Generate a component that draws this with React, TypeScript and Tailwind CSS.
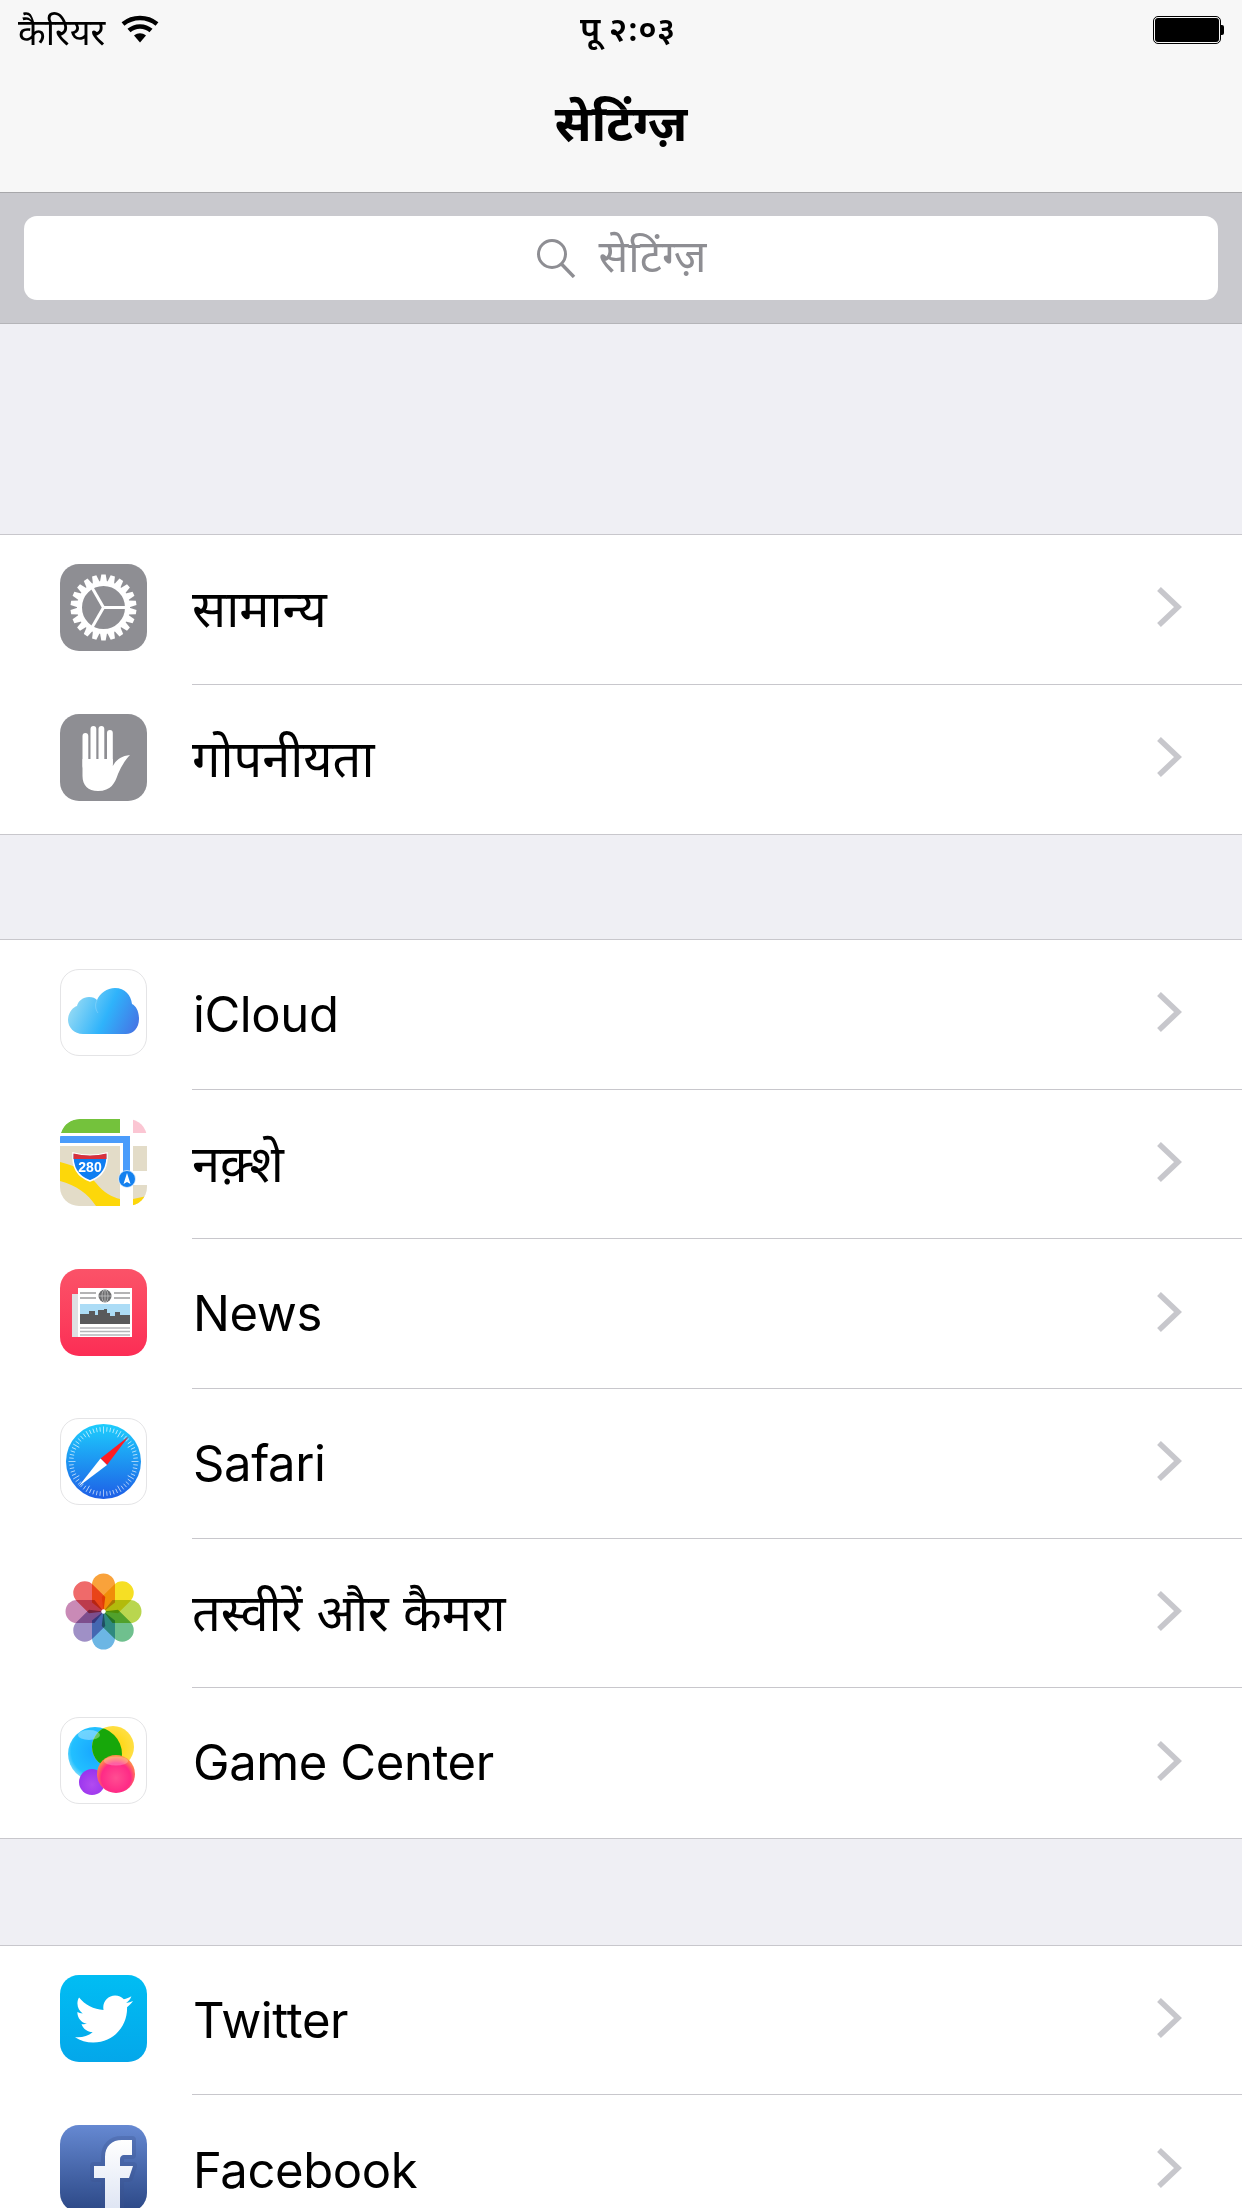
import { FaTwitter } from "react-icons/fa";
import { ReactNode } from "react";

function Svg({ children }: { children: ReactNode }) {
  return (
    <svg viewBox="0 0 87 87" className="block w-full h-full">
      {children}
    </svg>
  );
}

function GearIcon() {
  const teeth = Array.from({ length: 22 }, (_, i) => (i * 360) / 22);
  return (
    <div className="w-[87px] h-[87px] rounded-[19px] bg-[#8e8e93]">
      <Svg>
        <g transform="translate(43.5 43.5)" stroke="#fff" fill="none">
          {teeth.map((a) => (
            <path key={a} d="M-3.6 -25L-2.2 -33H2.2L3.6 -25Z" fill="#fff" stroke="none" transform={`rotate(${a})`} />
          ))}
          <circle r="24" strokeWidth="5" />
          <line x1="0" y1="0" x2="23" y2="0" strokeWidth="3" />
          <line x1="0" y1="0" x2="-11.5" y2="20" strokeWidth="3" />
          <line x1="0" y1="0" x2="-11.5" y2="-20" strokeWidth="3" />
        </g>
      </Svg>
    </div>
  );
}

function HandIcon() {
  return (
    <div className="w-[87px] h-[87px] rounded-[19px] bg-[#8e8e93]">
      <Svg>
        <g fill="#fff">
          <rect x="22.5" y="19" width="5.8" height="36" rx="2.9" />
          <rect x="30.5" y="12" width="5.8" height="36" rx="2.9" />
          <rect x="38.5" y="12" width="5.8" height="36" rx="2.9" />
          <rect x="47" y="16" width="5.8" height="36" rx="2.9" />
          <path d="M22.5 45H52.8V52C56 46 61 42 70 41C65 46 61 53 58 60C55 69 51 77 38 77C28 77 22.5 71 22.5 62Z" />
        </g>
      </Svg>
    </div>
  );
}

function CloudIcon() {
  return (
    <div className="w-[87px] h-[87px] rounded-[19px] bg-white border border-[#e4e4e6]">
      <svg viewBox="1 1 85 85" className="block w-full h-full">
        <defs>
          <linearGradient id="cloudGrad" x1="0" y1="0.4" x2="1" y2="0.7">
            <stop offset="0" stopColor="#9adcf4" />
            <stop offset="0.55" stopColor="#2fb3fb" />
            <stop offset="1" stopColor="#4478e6" />
          </linearGradient>
        </defs>
        <path
          d="M23 65C14 65 8 58 8 51C8 44 13 38 17 37C18 32 23 28 29 28C33 28 35 29 37 31C40 24 47 19 55 19C65 19 71 26 72 35C76 37 79 42 79 50C79 59 73 65 66 65Z"
          fill="url(#cloudGrad)"
        />
        <path d="M37 31C35 35 35 40 38 44" stroke="#fff" strokeOpacity="0.2" fill="none" />
      </svg>
    </div>
  );
}

function MapsIcon() {
  return (
    <div className="w-[87px] h-[87px] rounded-[19px] overflow-hidden bg-white">
      <Svg>
        <path d="M1 14C4 5 11 0 20 0H60V14Z" fill="#74c23c" />
        <path d="M73 0C80 1 85 6 87 14H73Z" fill="#fbc6d3" />
        <rect x="0" y="17" width="70" height="7" fill="#4a9cfb" />
        <rect x="63" y="17" width="7" height="38" fill="#4a9cfb" />
        <rect x="0" y="27" width="60" height="60" fill="#e3dcc8" />
        <rect x="73" y="27" width="14" height="25" fill="#e3dcc8" />
        <rect x="73" y="66" width="14" height="21" fill="#e3dcc8" />
        <path d="M0 43C20 48 28 54 36 64C44 74 52 78 60 80V87H36C28 75 16 66 0 62Z" fill="#fdd70a" />
        <path d="M73 80L87 77V87H73Z" fill="#fdd70a" />
        <path d="M13 34C24 37 36 37 47 34C48 47 44 57 30 62C16 57 12 47 13 34Z" fill="#0f7ef2" stroke="#fff" strokeWidth="1.5" />
        <path d="M13.5 34.5C24 37 36 37 46.5 34.5L46.5 40H13.5Z" fill="#d8313d" />
        <text x="30" y="53" textAnchor="middle" fill="#fff" fontSize="14" fontWeight="700" fontFamily="Liberation Sans">280</text>
        <circle cx="67" cy="60" r="8.5" fill="#1481ef" stroke="#e9f2fb" strokeWidth="0.8" />
        <path d="M67 54L70.5 65L67 63L63.5 65Z" fill="#fff" />
      </Svg>
    </div>
  );
}

function NewsIcon() {
  return (
    <div className="w-[87px] h-[87px] rounded-[19px] bg-gradient-to-b from-[#fb5268] to-[#fc2c55]">
      <Svg>
        <rect x="12" y="25" width="8" height="43" fill="#dfdfe2" />
        <rect x="18" y="19" width="54" height="49" fill="#fff" />
        <g stroke="#8a8a8c" strokeWidth="1.3">
          <line x1="20" y1="24" x2="36" y2="24" />
          <line x1="20" y1="29" x2="36" y2="29" />
          <line x1="54" y1="24" x2="70" y2="24" />
          <line x1="54" y1="29" x2="70" y2="29" />
        </g>
        <circle cx="45" cy="27" r="6.5" fill="#6c6c6e" />
        <g stroke="#cfcfcf" strokeWidth="0.7" fill="none">
          <line x1="38.5" y1="27" x2="51.5" y2="27" />
          <line x1="45" y1="20.5" x2="45" y2="33.5" />
          <ellipse cx="45" cy="27" rx="3" ry="6.5" />
        </g>
        <rect x="20" y="35" width="50" height="20" fill="#acdcf6" />
        <path d="M20 45H29V42H35V46H38V41H44V40H47V44H50V47H55V43H60V46H70V55H20Z" fill="#59595b" />
        <g stroke="#b5b5b8" strokeWidth="1.4">
          <line x1="20" y1="59" x2="70" y2="59" />
          <line x1="20" y1="62.5" x2="70" y2="62.5" />
          <line x1="20" y1="66" x2="70" y2="66" />
        </g>
      </Svg>
    </div>
  );
}

function SafariIcon() {
  const ticks = Array.from({ length: 60 }, (_, i) => i * 6);
  return (
    <div className="w-[87px] h-[87px] rounded-[19px] bg-white border border-[#e4e4e6]">
      <svg viewBox="1 1 85 85" className="block w-full h-full">
        <defs>
          <linearGradient id="safariGrad" x1="0" y1="0" x2="0" y2="1">
            <stop offset="0" stopColor="#1dcdfd" />
            <stop offset="1" stopColor="#1e5ee6" />
          </linearGradient>
        </defs>
        <circle cx="43.5" cy="43.5" r="37.5" fill="url(#safariGrad)" />
        <g transform="translate(43.5 43.5)" stroke="#fff" strokeOpacity="0.75" strokeWidth="0.8">
          {ticks.map((a) => (
            <line key={a} x1="0" y1={a % 30 === 0 ? -35 : -34.5} x2="0" y2={a % 30 === 0 ? -28 : -30} transform={`rotate(${a})`} />
          ))}
        </g>
        <polygon points="68.5,18.5 40.5,40.5 47,47" fill="#ff1c23" />
        <polygon points="18.5,68.5 40.5,40.5 47,47" fill="#fff" />
      </svg>
    </div>
  );
}

function PhotosIcon() {
  const petals = [
    [0, "#f9a23b"],
    [45, "#f6df24"],
    [90, "#b9d64f"],
    [135, "#6fc08e"],
    [180, "#6cb6e4"],
    [225, "#9f90c6"],
    [270, "#c98ab6"],
    [315, "#ef6a6a"],
  ] as const;
  return (
    <div className="w-[87px] h-[87px] rounded-[19px] bg-white">
      <Svg>
        <g transform="translate(43.5 43.5)">
          {petals.map(([a, c]) => (
            <path
              key={a}
              d="M0 0L-11.5 -9V-26.5A11.5 11.5 0 0 1 11.5 -26.5V-9Z"
              fill={c}
              transform={`rotate(${a})`}
              className="mix-blend-multiply"
            />
          ))}
          <circle r="2.2" fill="#fff" />
        </g>
      </Svg>
    </div>
  );
}

function GameCenterIcon() {
  return (
    <div className="w-[87px] h-[87px] rounded-[19px] bg-white border border-[#e4e4e6]">
      <svg viewBox="1 1 85 85" className="block w-full h-full">
        <defs>
          <radialGradient id="gcBlue" cx="0.5" cy="0.45" r="0.55">
            <stop offset="0" stopColor="#18a6ff" />
            <stop offset="0.8" stopColor="#22c0ff" />
            <stop offset="1" stopColor="#7fdcfb" />
          </radialGradient>
          <radialGradient id="gcYellow" cx="0.5" cy="0.5" r="0.55">
            <stop offset="0" stopColor="#ffd400" />
            <stop offset="1" stopColor="#ffe04a" />
          </radialGradient>
          <radialGradient id="gcPink" cx="0.5" cy="0.6" r="0.55">
            <stop offset="0" stopColor="#ff4e92" />
            <stop offset="0.7" stopColor="#ff2a86" />
            <stop offset="1" stopColor="#ff8a4a" />
          </radialGradient>
          <radialGradient id="gcPurple" cx="0.5" cy="0.6" r="0.55">
            <stop offset="0" stopColor="#b24bf0" />
            <stop offset="1" stopColor="#9a35ee" />
          </radialGradient>
          <clipPath id="gcBlueClip">
            <circle cx="35" cy="37" r="27" />
          </clipPath>
        </defs>
        <circle cx="35" cy="37" r="27" fill="url(#gcBlue)" />
        <circle cx="53" cy="30" r="21" fill="url(#gcYellow)" />
        <circle cx="53" cy="30" r="21" fill="#17a70a" clipPath="url(#gcBlueClip)" />
        <ellipse cx="29" cy="18" rx="11" ry="5" fill="#fff" opacity="0.35" />
        <circle cx="32" cy="65" r="13" fill="url(#gcPurple)" />
        <circle cx="56" cy="57" r="19" fill="url(#gcPink)" />
        <ellipse cx="56" cy="44" rx="12" ry="4.5" fill="#fff" opacity="0.25" />
      </svg>
    </div>
  );
}

function TwitterIcon() {
  return (
    <div className="w-[87px] h-[87px] rounded-[19px] bg-gradient-to-b from-[#01bdf3] to-[#04a7ea] flex items-center justify-center">
      <FaTwitter className="text-white w-[58px] h-[58px]" />
    </div>
  );
}

function FacebookIcon() {
  return (
    <div className="w-[87px] h-[87px] rounded-[19px] bg-gradient-to-b from-[#6689d2] to-[#2c4886] overflow-hidden">
      <Svg>
        <defs>
          <linearGradient id="fbGrad" x1="0" y1="0" x2="0" y2="1">
            <stop offset="0" stopColor="#ffffff" />
            <stop offset="1" stopColor="#dde4f3" />
          </linearGradient>
        </defs>
        <path
          d="M45 87V53H34V41H45V32C45 21 52 15 62 15H72V30H65C61 30 60 32 60 35V41H73L69 53H60V87Z"
          fill="url(#fbGrad)"
          stroke="#3a5490"
          strokeOpacity="0.3"
          strokeWidth="8"
          paintOrder="stroke"
          strokeLinejoin="round"
        />
      </Svg>
    </div>
  );
}

function Chevron() {
  return (
    <svg width="26" height="42" viewBox="0 0 26 42" className="block mb-[4px]">
      <path d="M3 3L22 21L3 39" fill="none" stroke="#c7c7cc" strokeWidth="5.5" />
    </svg>
  );
}

function Row({ icon, label, latin, last }: { icon: ReactNode; label: string; latin?: boolean; last?: boolean }) {
  return (
    <div className="flex h-[149.6px] pl-[60px]">
      <div className="flex items-center shrink-0 w-[132px] pb-[4px]">{icon}</div>
      <div className={"flex-1 flex items-center justify-between pr-[60px] " + (last ? "" : "border-b border-[#c8c7cc]")}>
        <span className={"leading-none text-black " + (latin ? "text-[49px] tracking-[-0.4px] pl-px" : "text-[50.5px]")}>{label}</span>
        <Chevron />
      </div>
    </div>
  );
}

const groups: { label: string; latin?: boolean; icon: ReactNode }[][] = [
  [
    { label: "सामान्य", icon: <GearIcon /> },
    { label: "गोपनीयता", icon: <HandIcon /> },
  ],
  [
    { label: "iCloud", latin: true, icon: <CloudIcon /> },
    { label: "नक़्शे", icon: <MapsIcon /> },
    { label: "News", latin: true, icon: <NewsIcon /> },
    { label: "Safari", latin: true, icon: <SafariIcon /> },
    { label: "तस्वीरें और कैमरा", icon: <PhotosIcon /> },
    { label: "Game Center", latin: true, icon: <GameCenterIcon /> },
  ],
  [
    { label: "Twitter", latin: true, icon: <TwitterIcon /> },
    { label: "Facebook", latin: true, icon: <FacebookIcon /> },
  ],
];

export default function App() {
  return (
    <div className="w-[1242px] h-[2208px] overflow-hidden bg-[#efeff4] font-['Inter','Noto_Sans',sans-serif]">
      {/* Nav bar */}
      <div className="h-[193px] bg-[#f7f7f7] border-b border-[#a7a7aa] flex flex-col">
        <div className="relative h-[64px] flex items-center justify-between px-[18px]">
          <div className="flex items-center gap-[16px]">
            <span className="text-[36px] leading-none text-black">कैरियर</span>
            <svg width="38" height="28" viewBox="0 0 38 28" className="mb-[6px]">
              <path d="M2 9C12 1 26 1 36 9" fill="none" stroke="#000" strokeWidth="4.5" />
              <path d="M8 15.5C14 10 24 10 30 15.5" fill="none" stroke="#000" strokeWidth="4.5" />
              <path d="M13 20.5C17 17.5 21 17.5 25 20.5L19 27.5Z" fill="#000" />
            </svg>
          </div>
          <span className="absolute left-[580px] top-[12px] text-[34px] leading-none font-semibold text-black">पू २:०३</span>
          <div className="flex items-center mb-[4px]">
            <div className="w-[68px] h-[28px] border border-black rounded-[5px] p-[1px]">
              <div className="w-full h-full bg-black rounded-[3px]" />
            </div>
            <div className="w-[3px] h-[10px] bg-black rounded-r-[2px]" />
          </div>
        </div>
        <div className="flex-1 flex items-center justify-center pb-[10px]">
          <span className="text-[50px] leading-none font-bold text-black">सेटिंग्ज़</span>
        </div>
      </div>

      {/* Search */}
      <div className="h-[131px] bg-[#c9c9ce] border-b border-[#b4b4b8] px-[24px] pt-[23px]">
        <div className="h-[84px] bg-white rounded-[13px] flex items-center justify-center gap-[23px]">
          <svg width="40" height="40" viewBox="0 0 40 40">
            <circle cx="16" cy="16" r="13.5" fill="none" stroke="#8e8e93" strokeWidth="3" />
            <line x1="25.5" y1="26" x2="38" y2="39" stroke="#8e8e93" strokeWidth="3.4" />
          </svg>
          <span className="text-[44px] leading-none text-[#8e8e93] mb-[4px]">सेटिंग्ज़</span>
        </div>
      </div>

      {/* Groups */}
      <div className="pt-[210px] flex flex-col">
        {groups.map((group, g) => (
          <div key={g} className={"bg-white border-y border-[#c8c7cc] " + (g === 0 ? "" : g === 1 ? "mt-[104px]" : "mt-[106px]")}>
            {group.map((row, i) => (
              <Row key={row.label} icon={row.icon} label={row.label} latin={row.latin} last={i === group.length - 1} />
            ))}
          </div>
        ))}
      </div>
    </div>
  );
}
